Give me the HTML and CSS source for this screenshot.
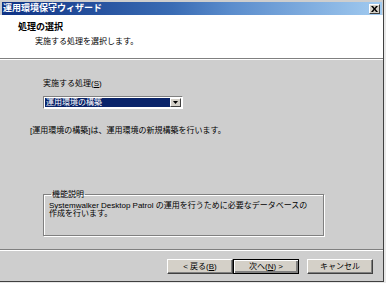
FILE: index.html
```html
<!DOCTYPE html>
<html lang="ja">
<head>
<meta charset="utf-8">
<title>運用環境保守ウィザード</title>
<link rel="stylesheet" href="styles.css">
</head>
<body>
<div class="window">
  <div class="titlebar">
    <span class="title">運用環境保守ウィザード</span>
    <span class="close">
      <svg width="7" height="6" viewBox="0 0 7 6"><path d="M0 0h2l1.5 2 1.5-2h2l-2.5 3 2.5 3h-2l-1.5-2-1.5 2h-2l2.5-3z" fill="#000"/></svg>
    </span>
  </div>
  <div class="header">
    <div class="header-title">処理の選択</div>
    <div class="header-sub">実施する処理を選択します。</div>
  </div>
  <div class="content">
    <div class="label">実施する処理(<u>S</u>)</div>
    <div class="select">
      <span class="select-value">運用環境の構築</span>
      <span class="select-arrow">
        <svg width="5" height="3" viewBox="0 0 5 3"><path d="M0 0h5l-2.5 3z" fill="#000"/></svg>
      </span>
    </div>
    <p class="desc">[運用環境の構築]は、運用環境の新規構築を行います。</p>
    <fieldset class="group">
      <legend>機能説明</legend>
      <p>Systemwalker Desktop Patrol の運用を行うために必要なデータベースの<br>作成を行います。</p>
    </fieldset>
  </div>
  <div class="footer">
    <button type="button" class="btn">&lt; 戻る(<u>B</u>)</button>
    <button type="button" class="btn default">次へ(<u>N</u>) &gt;</button>
    <button type="button" class="btn cancel">キャンセル</button>
  </div>
</div>
</body>
</html>
```

FILE: styles.css
```css
html, body {
    margin: 0;
    padding: 0;
    background: #e8e8e8;
}
body {
    font-family: "Liberation Sans", "Noto Sans CJK JP", sans-serif;
    font-size: 8px;
    color: #000;
}
.window {
    box-sizing: border-box;
    width: 384px;
    height: 282px;
    background: #cecece;
    border-right: 1px solid #404040;
    border-bottom: 1px solid #404040;
    padding-top: 2px;
    display: flex;
    flex-direction: column;
}
.titlebar {
    height: 13px;
    margin: 0 1px 0 2px;
    background: linear-gradient(to right, #0f3284, #3a6cb4 45%, #5a8ccc 60%, #a2cbf0);
    display: flex;
    align-items: center;
    justify-content: space-between;
}
.title {
    color: #fff;
    font-weight: bold;
    font-size: 9px;
    line-height: 13px;
    padding-left: 1px;
}
.close {
    box-sizing: border-box;
    width: 11px;
    height: 10px;
    margin-right: 2px;
    background: #d4d0c8;
    border: 1px solid;
    border-color: #fff #404040 #404040 #fff;
    display: flex;
    align-items: center;
    justify-content: center;
}
.close svg {
    display: block;
}
.header {
    height: 44px;
    box-sizing: border-box;
    background: #fff;
    border-bottom: 1px solid #808080;
    box-shadow: 0 1px 0 #fff;
    padding: 7px 0 0 18px;
}
.header-title {
    font-weight: bold;
    font-size: 9px;
    line-height: 11px;
}
.header-sub {
    line-height: 11px;
    margin: 3px 0 0 17px;
}
.content {
    flex: 1;
    padding: 20px 0 0 0;
    line-height: 10px;
}
.label {
    margin-left: 43px;
}
.label u, .btn u {
    text-decoration: underline;
}
.select {
    box-sizing: border-box;
    width: 140px;
    height: 13px;
    margin: 7px 0 0 43px;
    background: #fff;
    border: 1px solid;
    border-color: #808080 #fff #fff #808080;
    display: flex;
    padding: 1px;
}
.select-value {
    flex: 1;
    background: #0a246a;
    color: #fff;
    line-height: 9px;
    padding-left: 1px;
}
.select-arrow {
    box-sizing: border-box;
    width: 11px;
    background: #d4d0c8;
    border: 1px solid;
    border-color: #fff #404040 #404040 #fff;
    display: flex;
    align-items: center;
    justify-content: center;
}
.desc {
    margin: 17px 0 0 30px;
}
.group {
    box-sizing: border-box;
    width: 281px;
    height: 46px;
    margin: 54px 0 0 43px;
    padding: 3px 0 0 5px;
    border: 1px solid #808080;
    box-shadow: 1px 1px 0 #fff, inset 1px 1px 0 #fff;
}
.group legend {
    padding: 0 1px;
    margin-left: 2px;
    line-height: 9px;
}
.group p {
    margin: 0;
    line-height: 8px;
}
.footer {
    height: 32px;
    box-sizing: border-box;
    border-top: 1px solid #808080;
    box-shadow: inset 0 1px 0 #fff;
    padding: 9px 0 0 167px;
    display: flex;
    align-items: flex-start;
}
.btn {
    box-sizing: border-box;
    width: 66px;
    height: 15px;
    padding: 0;
    font: inherit;
    line-height: 11px;
    background: #d4d0c8;
    border: 1px solid;
    border-color: #fff #404040 #404040 #fff;
    box-shadow: inset -1px -1px 0 #808080;
}
.btn.default {
    border: 1px solid #000;
    box-shadow: inset 1px 1px 0 #fff, inset -2px -2px 0 #808080;
}
.btn.cancel {
    margin-left: 8px;
}
```
